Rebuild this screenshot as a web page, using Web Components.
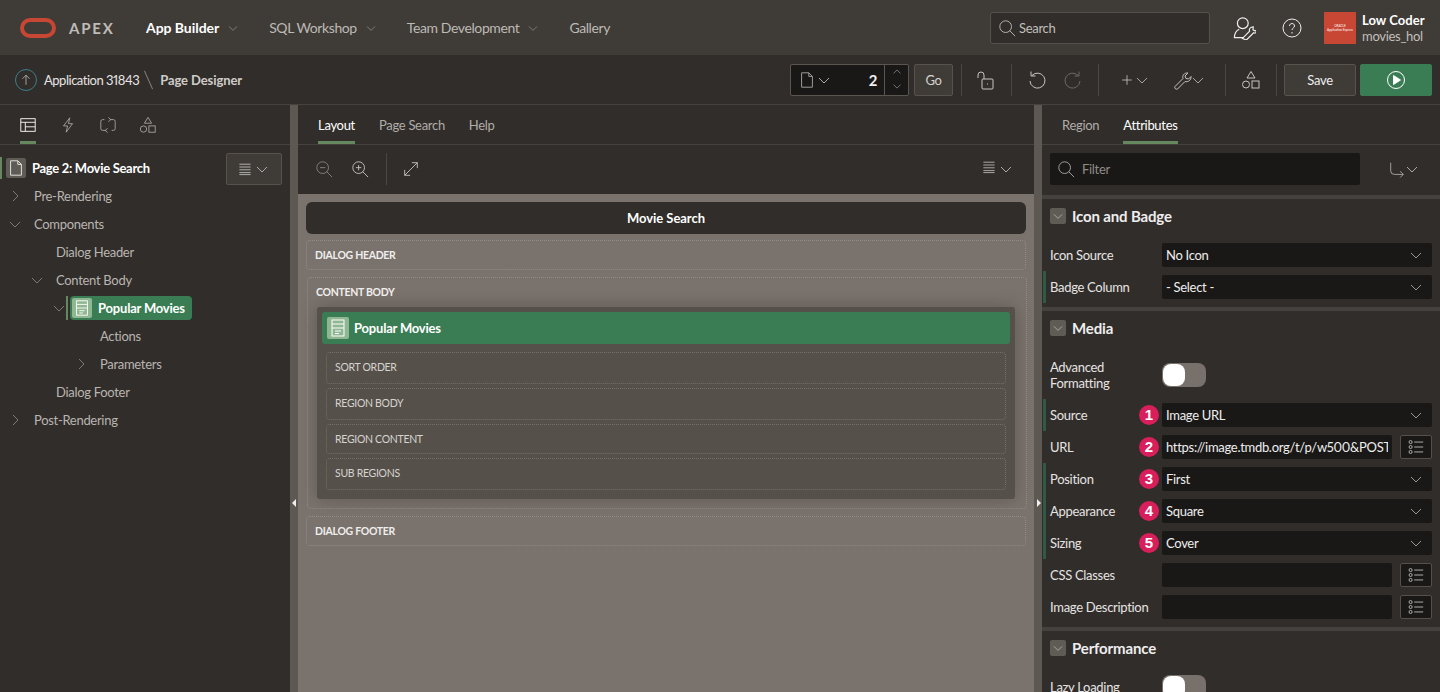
<!DOCTYPE html>
<html lang="en">
<head>
<meta charset="UTF-8">
<title>Page Designer</title>
<style>
  html, body { margin: 0; height: 692px; overflow: hidden; background: #312d2a; }
  body { font: 13px/16px Lato, "Noto Sans", sans-serif; color: #d6d3d0; letter-spacing: -.3px; font-feature-settings: "pnum"; }
  apex-app { height: 692px; }
</style>
</head>
<body>
<apex-app>
  <apex-header slot="header"></apex-header>
  <apex-toolbar slot="toolbar"></apex-toolbar>
  <tree-panel slot="left"></tree-panel>
  <layout-panel slot="center"></layout-panel>
  <attr-panel slot="right"></attr-panel>
</apex-app>

<script>
  const ICONS = {
    chev: '<path d="M5 8l5 5 5-5"/>',
    chevr: '<path d="M8 5l5 5-5 5"/>',
    chevu: '<path d="M5 12l5-5 5 5"/>',
    search: '<circle cx="8.5" cy="8.5" r="6.5"/><path d="M13 13l6 6"/>',
    userwrench: '<circle cx="9" cy="6" r="4.5"/><path d="M6 11c-2 1-4 3-4 7h8"/><path d="M11 19l6-6c1.5.7 3.5-.5 3.5-3l-2 1.500-2-1 .2-2.500c-2.500 0-3.800 2-3 3.700l-6 6z" transform="translate(1 1)"/>',
    help: '<circle cx="10" cy="10" r="9"/><path d="M7.500 8c0-3.300 5-3.300 5 0 0 2-2.500 2-2.500 4"/><path d="M10 14v1.500"/>',
    up: '<path d="M10 16V4M5.500 8.500L10 4l4.500 4.500"/>',
    page: '<path d="M4 2h8l4 4v12H4zM12 2v4h4"/>',
    lock: '<rect x="7" y="9" width="11" height="10" rx="1"/><path d="M3 8V5a3 3 0 0 1 6 0v4"/><path d="M12.500 13.500v1"/>',
    undo: '<path d="M5 5.500A7.500 7.500 0 1 1 3 11"/><path d="M4 1.500v4.500h4.500"/>',
    redo: '<path d="M15 5.500A7.500 7.500 0 1 0 17 11"/><path d="M16 1.500v4.500h-4.500"/>',
    plus: '<path d="M10 4v12M4 10h12"/>',
    wrench: '<path d="M3 16.500l8-8c-1-2.500 1-6 5-5.500l-3 3 1 2.500 2.500 .5 2.500-2.500c.5 3.500-3 6-6 5l-7.500 7.500c-1.500 1-3.500-1-2.500-2.500z"/>',
    shapes: '<path d="M10 1.500l4 6.500H6z"/><circle cx="5" cy="14.500" r="3.500"/><rect x="11" y="11" width="7" height="7"/>',
    play: '<circle cx="10" cy="10" r="8.500"/><path d="M7.500 5.500l7 4.500-7 4.500z" fill="currentColor"/>',
    layout: '<rect x="2" y="3" width="16" height="14"/><path d="M2 7h16M7 7v10M7 12h11"/>',
    bolt: '<path d="M12 2L5 11h4.500L8 18l7-9.500h-4.500z"/>',
    sync: '<path d="M6 4H4a2 2 0 0 0-2 2v8a2 2 0 0 0 2 2h4M14 16h2a2 2 0 0 0 2-2V6a2 2 0 0 0-2-2h-4"/><path d="M10.500 1.500L13 4l-2.500 2.500M9.500 13.500L7 16l2.500 2.500"/>',
    menu: '<path d="M3 4h14M3 7.500h14M3 11h14M3 14.500h14M3 17h14" />',
    zoomout: '<circle cx="8.500" cy="8.500" r="6.500"/><path d="M13 13l6 6M5.500 8.500h6"/>',
    zoomin: '<circle cx="8.500" cy="8.500" r="6.500"/><path d="M13 13l6 6M5.500 8.500h6M8.500 5.500v6"/>',
    expand: '<path d="M3 17L17 3M11 3h6v6M3 11v6h6"/>',
    region: '<rect x="4" y="2" width="12" height="16"/><path d="M4 6h12M4 10h12M7 13h6M7 15.500h4"/>',
    route: '<path d="M3 3v9a4 4 0 0 0 4 4h10M13.500 12.500L17 16l-3.500 3.500"/>',
    list: '<circle cx="4" cy="4.500" r="1.700"/><circle cx="4" cy="10" r="1.700"/><circle cx="4" cy="15.500" r="1.700"/><path d="M8 4.500h10M8 10h10M8 15.500h10"/>'
  };

  // little helper so each element only has to say what goes in its shadow root
  function define(tag, css, render) {
    customElements.define(tag, class extends HTMLElement {
      connectedCallback() {
        if (this.shadowRoot) return;
        const root = this.attachShadow({ mode: 'open' });
        root.innerHTML = '<style>' + css + '</style>' + render(this);
      }
    });
  }
  const ic = (name, size, extra) =>
    `<apex-icon name="${name}" size="${size || 20}" style="${extra || ''}"></apex-icon>`;

  define('apex-icon', ':host{display:inline-flex;flex:none} svg{display:block;fill:none;stroke:currentColor;stroke-width:1}',
    el => {
      const s = el.getAttribute('size') || 20;
      return `<svg width="${s}" height="${s}" viewBox="0 0 20 20">${ICONS[el.getAttribute('name')]}</svg>`;
    });

  define('apex-app', `
    :host{display:grid;grid-template-columns:290px 8px 736px 8px 398px;grid-template-rows:55px 50px 587px;overflow:hidden}
    ::slotted([slot=header]),::slotted([slot=toolbar]){grid-column:1/-1}
    .split{background:#5d5852;position:relative}
    .split i{position:absolute;top:394px;width:0;height:0;border:4px solid transparent}
    .l i{border-right-color:#eee;border-left:0;left:2px}
    .r i{left:3px;border-left-color:#eee;border-right:0}
  `, () => `
    <slot name="header"></slot><slot name="toolbar"></slot>
    <slot name="left"></slot>
    <div class="split l"><i></i></div>
    <slot name="center"></slot>
    <div class="split r"><i></i></div>
    <slot name="right"></slot>`);

  define('nav-item', `
    :host{display:flex;align-items:center;font-size:14px;color:#bdb9b5;letter-spacing:-.4px}
    :host([active]){color:#fff;font-weight:700;letter-spacing:-.05px}
    apex-icon{color:#8f8b87}
  `, el => `<slot></slot>${el.hasAttribute('menu') ? ic('chev', 16, 'margin-left:6px') : ''}`);

  define('apex-header', `
    :host{display:flex;align-items:center;background:#3f3c37;height:55px;padding:0 7px 0 20px;box-sizing:border-box}
    .logo{width:36px;height:20px;box-sizing:border-box;border:4px solid #c74634;border-radius:10px}
    .apex{margin-left:13px;font-size:15px;font-weight:700;letter-spacing:1.800px;color:#bfbbb7;width:77px}
    nav{display:flex;gap:28px}
    .search{margin-left:auto;margin-right:-1px;width:220px;height:32px;box-sizing:border-box;background:#312d2a;border:1px solid #55504a;border-radius:3px;display:flex;align-items:center;gap:3px;padding-left:7px;color:#c2bfbb;font-size:13px}
    .avatar{width:32px;height:32px;background:#c74634;margin-left:22px;color:#fff;font-size:3px;line-height:4px;letter-spacing:0;white-space:nowrap;display:flex;flex-direction:column;align-items:center;justify-content:center}
    .user{margin-left:6px;width:71px;line-height:16px}
    .user b{display:block;color:#fff;font-size:13px;letter-spacing:.05px}
    .user span{color:#c2bfbb;font-size:13px}
  `, () => `
    <div class="logo"></div><div class="apex">APEX</div>
    <nav>
      <nav-item active menu>App Builder</nav-item>
      <nav-item menu>SQL Workshop</nav-item>
      <nav-item menu>Team Development</nav-item>
      <nav-item>Gallery</nav-item>
    </nav>
    <div class="search">${ic('search', 18)}Search</div>
    ${ic('userwrench', 24, 'color:#eee;margin-left:23px')}
    ${ic('help', 20, 'color:#eee;margin-left:26px')}
    <div class="avatar"><span>ORACLE</span><span>Application Express</span></div>
    <div class="user"><b>Low Coder</b><span>movies_hol</span></div>`);

  define('apex-toolbar', `
    :host{display:flex;align-items:center;height:50px;box-sizing:border-box;background:#312d2a;border-bottom:1px solid #46423d;padding:0 8px 0 15px;color:#c9c6c2}
    .up{width:20px;height:20px;border:1px solid #3d7d8c;border-radius:50%;display:flex;align-items:center;justify-content:center;color:#bbb;margin-right:7px}
    .crumb{color:#e6e4e2;letter-spacing:-.48px}
    .slash{width:1px;height:20px;background:#8a857f;transform:rotate(-24deg);margin:0 11px 0 9px}
    .cur{font-weight:700;color:#cfccc8;letter-spacing:-.1px}
    .page{margin-left:auto;width:119px;height:32px;box-sizing:border-box;background:#1a1816;border:1px solid #5a554f;border-radius:2px;display:flex;align-items:center;padding-left:7px;color:#aaa}
    .page b{margin-left:auto;color:#eee;font-size:15px;font-weight:700;margin-right:7px}
    .spin{width:23px;height:30px;border-left:1px solid #5a554f;display:flex;flex-direction:column;align-items:center;justify-content:center;color:#999}
    .btn{height:32px;box-sizing:border-box;background:#3f3c37;border:1px solid #57524c;border-radius:2px;display:flex;align-items:center;justify-content:center;color:#d6d3d0}
    .go{width:39px;margin-left:5px}
    .sep{width:1px;height:32px;background:#4a4641}
    .it{display:flex;align-items:center;justify-content:center;color:#c9c6c2}
    .lft{justify-content:flex-start}
    .save{width:72px;margin-left:7px;color:#eee}
    .run{width:72px;margin-left:4px;background:#3a7d54;border-color:#3a7d54;color:#fff}
  `, () => `
    <div class="up">${ic('up', 16)}</div><span class="crumb">Application 31843</span>
    <div class="slash"></div><span class="cur">Page Designer</span>
    <div class="page">${ic('page', 18)}${ic('chev', 20, 'margin-left:-2px')}<b>2</b>
      <div class="spin">${ic('chevu', 14, 'margin-top:-1px')}${ic('chev', 14)}</div></div>
    <div class="btn go">Go</div>
    <div class="sep" style="margin-left:8px"></div>
    <div class="it" style="width:49px;padding-right:3px;box-sizing:border-box">${ic('lock', 20)}</div><div class="sep"></div>
    <div class="it" style="width:50px">${ic('undo', 20)}</div>
    <div class="it" style="width:22px;color:#6d6964">${ic('redo', 20)}</div>
    <div class="it" style="width:14px"></div><div class="sep"></div>
    <div class="it lft" style="width:56px;padding-left:20px;box-sizing:border-box">${ic('plus', 16)}${ic('chev', 20, 'margin-left:-3px;color:#a8a4a0')}</div>
    <div class="it lft" style="width:70px;padding-left:17px;box-sizing:border-box">${ic('wrench', 20)}${ic('chev', 20, 'margin-left:-4px;color:#a8a4a0')}</div><div class="sep"></div>
    <div class="it" style="width:50px">${ic('shapes', 20)}</div><div class="sep"></div>
    <div class="btn save">Save</div>
    <div class="btn run">${ic('play', 20)}</div>`);

  define('apex-tabs', `
    :host{display:flex;height:40px;box-sizing:border-box;border-bottom:1px solid #46423d;gap:24px;padding-left:20px;color:#b0aca8}
    ::slotted(*){display:flex;align-items:center;height:39px;padding-top:3px;box-sizing:border-box;border-bottom:3px solid transparent}
    ::slotted([on]){color:#fff;border-bottom-color:#66885f}
  `, () => '<slot></slot>');

  define('tree-row', `
    :host{display:flex;align-items:center;height:28px;color:#b9b5b1;padding-left:calc(var(--lv,0) * 22px)}
    .hold{width:34px;flex:none;display:flex;box-sizing:border-box;padding-left:5px;color:#7d7974}
    :host([sel]) .hold{width:26px}
    .sel{display:flex;align-items:center;height:24px;background:#3a7d54;border-radius:4px;color:#fff;font-weight:700;padding:0 7px 0 2px;gap:6px;position:relative;letter-spacing:-.2px}
    .sel::before{content:"";position:absolute;left:-4px;top:0;bottom:0;width:2px;background:#66885f}
    .ri{width:20px;height:20px;background:#8fb791;border-radius:2px;color:#fff;display:flex;align-items:center;justify-content:center}
  `, el => {
    const t = el.getAttribute('toggle');
    const tg = `<div class="hold">${t ? ic(t === 'open' ? 'chev' : 'chevr', 20) : ''}</div>`;
    if (el.hasAttribute('sel')) return `${tg}<div class="sel"><div class="ri">${ic('region', 18)}</div><slot></slot></div>`;
    return `${tg}<slot></slot>`;
  });

  define('tree-panel', `
    :host{display:block;background:#312d2a;overflow:hidden}
    .top{display:flex;align-items:center;height:32px;margin-top:8px}
    .top::before{content:"";width:2px;height:22px;background:#66885f;margin-top:-2px}
    .pi{width:20px;height:20px;margin:-2px 0 0 4px;background:#5f5b55;border-radius:2px;color:#eee;display:flex;align-items:center;justify-content:center}
    .top b{margin:-2px 0 0 6px;color:#fff}
    .mbtn{margin-left:auto;margin-right:8px;width:56px;height:32px;box-sizing:border-box;background:#3f3c37;border:1px solid #57524c;border-radius:2px;display:flex;align-items:center;justify-content:center;color:#ccc}
    .tree{margin-top:-3px}
  `, () => `
    <apex-tabs>
      <div on style="width:16px;justify-content:center">${ic('layout', 18)}</div>
      <div style="width:16px;justify-content:center">${ic('bolt', 18, 'color:#a8a4a0')}</div>
      <div style="width:16px;justify-content:center">${ic('sync', 18, 'color:#a8a4a0')}</div>
      <div style="width:16px;justify-content:center">${ic('shapes', 18, 'color:#a8a4a0')}</div></apex-tabs>
    <div class="top"><div class="pi">${ic('page', 18)}</div><b>Page 2: Movie Search</b>
      <div class="mbtn">${ic('menu', 16)}${ic('chev', 20, 'margin-left:-1px;color:#aaa')}</div></div>
    <div class="tree">
      <tree-row toggle="closed">Pre-Rendering</tree-row>
      <tree-row toggle="open">Components</tree-row>
      <tree-row style="--lv:1">Dialog Header</tree-row>
      <tree-row style="--lv:1" toggle="open">Content Body</tree-row>
      <tree-row style="--lv:2" toggle="open" sel>Popular Movies</tree-row>
      <tree-row style="--lv:3">Actions</tree-row>
      <tree-row style="--lv:3" toggle="closed">Parameters</tree-row>
      <tree-row style="--lv:1">Dialog Footer</tree-row>
      <tree-row toggle="closed">Post-Rendering</tree-row>
    </div>`);

  define('drop-zone', `
    :host{display:block;box-sizing:border-box;border:1px dotted #938c86;border-radius:4px;padding:0 8px;font-size:10.500px;font-weight:700;color:#f0eeec;height:var(--h,30px);line-height:28px}
    :host([inner]){font-weight:400;color:#d6d3d0;border-color:#76716b}
  `, () => '<slot></slot>');

  define('layout-panel', `
    :host{display:flex;flex-direction:column;background:#312d2a;overflow:hidden}
    .bar{height:49px;display:flex;align-items:center;color:#c9c6c2;padding:0 0 1px 17px;box-sizing:border-box}
    .sep{width:1px;height:32px;background:#4a4641;margin:0 15px 0 17px}
    .canvas{flex:1;background:#7a726c;padding:8px;display:flex;flex-direction:column}
    .title{height:32px;background:#312d2a;border-radius:6px;display:flex;align-items:center;justify-content:center;color:#fff;font-weight:700;letter-spacing:-.05px}
    .body{margin:7px -1px 0 1px;height:232px;box-sizing:border-box;border:1px dotted #938c86;border-radius:4px;padding:0 11px 9px 9px}
    .lbl{height:29px;line-height:29px;font-size:10.500px;font-weight:700;color:#f0eeec;margin-left:-1px}
    .rg{height:192px;box-sizing:border-box;background:#55504a;border-radius:3px;padding:5px;box-shadow:0 0 18px rgba(0,0,0,.22)}
    .head{height:32px;background:#3a7d54;border-radius:3px;display:flex;align-items:center;padding-left:5px;gap:5px;color:#fff;font-weight:700;letter-spacing:-.2px}
    .ri{width:22px;height:22px;background:#8fb791;border-radius:2px;display:flex;align-items:center;justify-content:center}
    .zones{padding:8px 4px 0;display:flex;flex-direction:column;gap:4px}
  `, () => `
    <apex-tabs><div on>Layout</div><div>Page Search</div><div>Help</div></apex-tabs>
    <div class="bar">${ic('zoomout', 18, 'color:#8a8682')}<span style="width:18px"></span>${ic('zoomin', 18)}
      <div class="sep"></div>${ic('expand', 18)}
      <span style="margin-left:auto;margin-right:18px;display:flex">${ic('menu', 16)}${ic('chev', 20, 'margin-left:-1px;color:#aaa')}</span></div>
    <div class="canvas">
      <div class="title">Movie Search</div>
      <drop-zone style="margin-top:6px;--h:30px">DIALOG HEADER</drop-zone>
      <div class="body"><div class="lbl">CONTENT BODY</div>
        <div class="rg"><div class="head"><div class="ri">${ic('region', 20)}</div>Popular Movies</div>
          <div class="zones">
            <drop-zone inner style="--h:32px">SORT ORDER</drop-zone>
            <drop-zone inner style="--h:32px">REGION BODY</drop-zone>
            <drop-zone inner style="--h:30px">REGION CONTENT</drop-zone>
            <drop-zone inner style="--h:32px">SUB REGIONS</drop-zone>
          </div></div></div>
      <drop-zone style="margin-top:7px;--h:30px">DIALOG FOOTER</drop-zone>
    </div>`);

  define('prop-section', `
    :host{display:block;border-top:4px solid #45413c;padding-bottom:4px}
    .h{height:40px;display:flex;align-items:center;padding:0 0 6px 8px;box-sizing:border-box;gap:6px;font-size:15px;font-weight:700;color:#eee;letter-spacing:-.15px}
    .t{width:16px;height:16px;background:#5f5b55;border-radius:2px;color:#bbb;display:flex;align-items:center;justify-content:center}
  `, el => `<div class="h"><div class="t">${ic('chev', 16)}</div>${el.getAttribute('label')}</div><slot></slot>`);

  define('prop-row', `
    :host{display:grid;grid-template-columns:112px minmax(0,1fr);align-items:center;height:32px;padding:0 8px;position:relative;color:#e6e4e2}
    :host([changed])::before{content:"";position:absolute;left:1px;top:0;bottom:0;width:3px;background:#2f5b45}
    .lb{display:flex;align-items:center;justify-content:space-between;padding-right:3px}
    .n{width:20px;height:20px;border-radius:50%;background:#d81e5b;color:#fff;font-family:"Liberation Sans",sans-serif;font-weight:700;font-size:15px;letter-spacing:0;display:flex;align-items:center;justify-content:center}
    .f{display:flex;gap:8px;min-width:0}
    .in{flex:1;min-width:0;height:24px;background:#1a1816;border-radius:2px;display:flex;align-items:center;padding:0 4px;color:#eee;white-space:nowrap}
    .in span{overflow:hidden;flex:1}
    .in apex-icon{margin-right:2px;color:#9c9894}
    .lst{width:32px;height:24px;flex:none;box-sizing:border-box;background:#1a1816;border:1px solid #55504a;border-radius:2px;display:flex;align-items:center;justify-content:center;color:#bbb}
    .tog{width:44px;height:24px;background:#78716b;border-radius:8px;position:relative}
    .tog::after{content:"";position:absolute;left:1px;top:1px;width:22px;height:22px;background:#fff;border-radius:8px}
  `, el => {
    const type = el.getAttribute('type') || 'select';
    const v = el.getAttribute('value') || '';
    const n = el.getAttribute('n');
    const f = type === 'toggle' ? '<div class="tog"></div>'
      : type === 'text' ? `<div class="in"><span>${v}</span></div><div class="lst">${ic('list', 18)}</div>`
      : `<div class="in"><span>${v}</span>${ic('chev', 20)}</div>`;
    return `<div class="lb"><span><slot></slot></span>${n ? `<div class="n">${n}</div>` : ''}</div><div class="f">${f}</div>`;
  });

  define('attr-panel', `
    :host{display:block;background:#312d2a;overflow:hidden}
    .flt{height:50px;display:flex;align-items:flex-start;padding:8px 0 0 8px;box-sizing:border-box}
    .box{width:310px;height:32px;background:#1a1816;border-radius:2px;display:flex;align-items:center;gap:7px;padding-left:7px;box-sizing:border-box;color:#8f8b87}
    .rt{display:flex;align-items:center;margin:6px 0 0 28px;color:#aaa}
  `, () => `
    <apex-tabs><div>Region</div><div on>Attributes</div></apex-tabs>
    <div class="flt"><div class="box">${ic('search', 18, 'color:#aaa')}Filter</div>
      <div class="rt">${ic('route', 18)}${ic('chev', 20, 'margin-left:-4px')}</div></div>
    <prop-section label="Icon and Badge">
      <prop-row value="No Icon">Icon Source</prop-row>
      <prop-row changed value="- Select -">Badge Column</prop-row>
    </prop-section>
    <prop-section label="Media">
      <prop-row type="toggle" style="height:48px">Advanced Formatting</prop-row>
      <prop-row changed n="1" value="Image URL">Source</prop-row>
      <prop-row n="2" type="text" value="https://image.tmdb.org/t/p/w500&amp;POSTER">URL</prop-row>
      <prop-row changed n="3" value="First">Position</prop-row>
      <prop-row changed n="4" value="Square">Appearance</prop-row>
      <prop-row changed n="5" value="Cover">Sizing</prop-row>
      <prop-row type="text">CSS Classes</prop-row>
      <prop-row type="text">Image Description</prop-row>
    </prop-section>
    <prop-section label="Performance">
      <prop-row type="toggle">Lazy Loading</prop-row>
    </prop-section>`);
</script>
</body>
</html>
